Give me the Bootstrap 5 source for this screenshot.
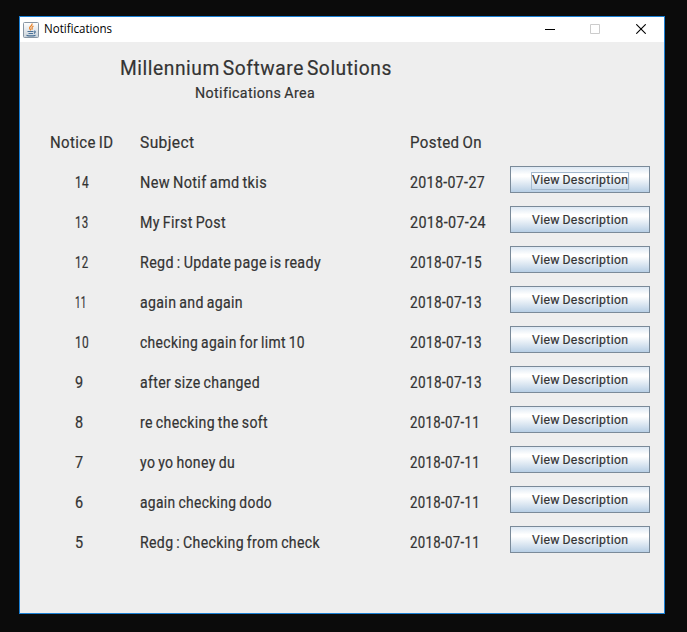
<!DOCTYPE html>
<html lang="en">
<head>
<meta charset="utf-8">
<meta name="viewport" content="width=device-width, initial-scale=1">
<title>Notifications</title>
<link href="https://cdn.jsdelivr.net/npm/bootstrap@5.3.0/dist/css/bootstrap.min.css" rel="stylesheet">
<style>
  body { background: #0b0b0b; height: 632px; overflow: hidden; padding: 16px 22px 0 19px; font-family: Roboto, "Liberation Sans", sans-serif; color: #333; }
  .app-window { width: 646px; height: 598px; border: 1px solid #1b80d4; background: #eee; }
  .title-strip { height: 25px; font: 12px/23px "Open Sans", "Noto Sans", sans-serif; color: #000; padding-left: 3px; }
  .caption-label { margin: -2px 0 0 5px; }
  .win-controls { padding: 0 18px 1px 0; }
  .heads { padding: 13px 0 0 100px; height: 81px; }
  .heads h1 { font-size: 20px; line-height: 26px; font-weight: 400; }
  .heads h1 .fit { word-spacing: -2.500px; letter-spacing: .6px; }
  .heads h2 { font-size: 15.500px; line-height: 24px; font-weight: 400; padding-left: 75px; }
  .notice { display: grid; grid-template-columns: 90px 270px 100px 140px; height: 40px; padding-left: 30px; font-size: 16px; line-height: 40px; }
  .notice .num { padding-left: 25px; }
  .fit { display: inline-block; white-space: nowrap; transform-origin: 0 50%; letter-spacing: .4px; word-spacing: -1px; -webkit-text-stroke: .2px #333; }
  .caption-label.fit { -webkit-text-stroke: 0; letter-spacing: 0; word-spacing: 0; }
  .btn.metal { width: 140px; height: 27px; margin-top: 3px; padding: 4px 0 0 21px; border: 1px solid #7a8a99; border-radius: 0; font-size: 13.500px; line-height: 17px; color: #333; background: linear-gradient(#dde8f3 0%, #fff 30%, #fff 38%, #b8cfe5 100%); display: block; text-align: left; }
  .metal .fit { height: 16px; line-height: 12px; margin-top: -1px; display: block; width: max-content; }
  .metal .focused { box-shadow: 0 0 0 1px #a3b8cc; }
</style>
<script src="https://cdn.jsdelivr.net/npm/bootstrap@5.3.0/dist/js/bootstrap.bundle.min.js"></script>
</head>
<body>
<main class="app-window">
  <header class="title-strip bg-white d-flex align-items-center">
    <svg width="16" height="16" viewBox="0 0 16 16"><defs><linearGradient id="g" x2="0" y2="1"><stop stop-color="#fff"/><stop offset="1" stop-color="#c9d2da"/></linearGradient></defs><rect x=".5" y=".5" width="15" height="15" rx="1" fill="url(#g)" stroke="#8795a3"/><path d="M9 1.500q.5 1.500-1.500 3t.5 3.700M10.500 4q-2.500 1.500-1 3.500" fill="none" stroke="#e8842c" stroke-width="1.300"/><path d="M4.500 9.500h6M5.500 11.500h4.500M11 9q2.500 0 0 2.500M3.500 13.300q4.500 1.200 9 0" fill="none" stroke="#4a7197" stroke-width="1.200"/></svg>
    <span class="caption-label fit" data-w="68">Notifications</span>
    <div class="win-controls d-flex align-items-center ms-auto">
      <svg width="10" height="10"><path d="M0 5.500h10" stroke="#000"/></svg>
      <svg width="81" height="10"><path d="M35.500.500h9v9h-9z" fill="none" stroke="#ccc"/></svg>
      <svg width="10" height="10"><path d="M.3.300l9.400 9.400M9.700.300l-9.400 9.400" stroke="#000" stroke-width="1.100"/></svg>
    </div>
  </header>
  <section>
    <div class="heads">
      <h1 class="m-0"><span class="fit" data-w="272">Millennium Software Solutions</span></h1>
      <h2 class="m-0"><span class="fit" data-w="120">Notifications Area</span></h2>
    </div>
    <div class="notice"><div><span class="fit" data-w="63.500">Notice ID</span></div><div><span class="fit" data-w="54.500">Subject</span></div><div><span class="fit" data-w="72">Posted On</span></div></div>
    <div id="notices"></div>
  </section>
</main>
<script>
  const notices = [
    ["14", 14, "New Notif amd tkis", 127, "2018-07-27", 75],
    ["13", 13.5, "My First Post", 86, "2018-07-24", 76],
    ["12", 13.5, "Regd : Update page is ready", 181, "2018-07-15", 72],
    ["11", 11.5, "again and again", 103, "2018-07-13", 72],
    ["10", 14, "checking again for limt 10", 165, "2018-07-13", 72],
    ["9", 8.5, "after size changed", 120, "2018-07-13", 72],
    ["8", 8.5, "re checking the soft", 128, "2018-07-11", 70],
    ["7", 8.5, "yo yo honey du", 95, "2018-07-11", 70],
    ["6", 8.5, "again checking dodo", 132, "2018-07-11", 70],
    ["5", 8.5, "Redg : Checking from check", 180, "2018-07-11", 70]
  ];
  document.getElementById("notices").innerHTML = notices.map((n, i) => `
    <div class="notice">
      <div class="num"><span class="fit" data-w="${n[1]}">${n[0]}</span></div>
      <div><span class="fit" data-w="${n[3]}">${n[2]}</span></div>
      <div><span class="fit" data-w="${n[5]}">${n[4]}</span></div>
      <button type="button" class="btn metal"><span class="fit ${i ? "" : "focused"}" data-w="96.500">View Description</span></button>
    </div>`).join("");
  document.querySelectorAll(".fit").forEach(el => {
    el.style.transform = `scaleX(${el.dataset.w / el.getBoundingClientRect().width})`;
  });
</script>
</body>
</html>
